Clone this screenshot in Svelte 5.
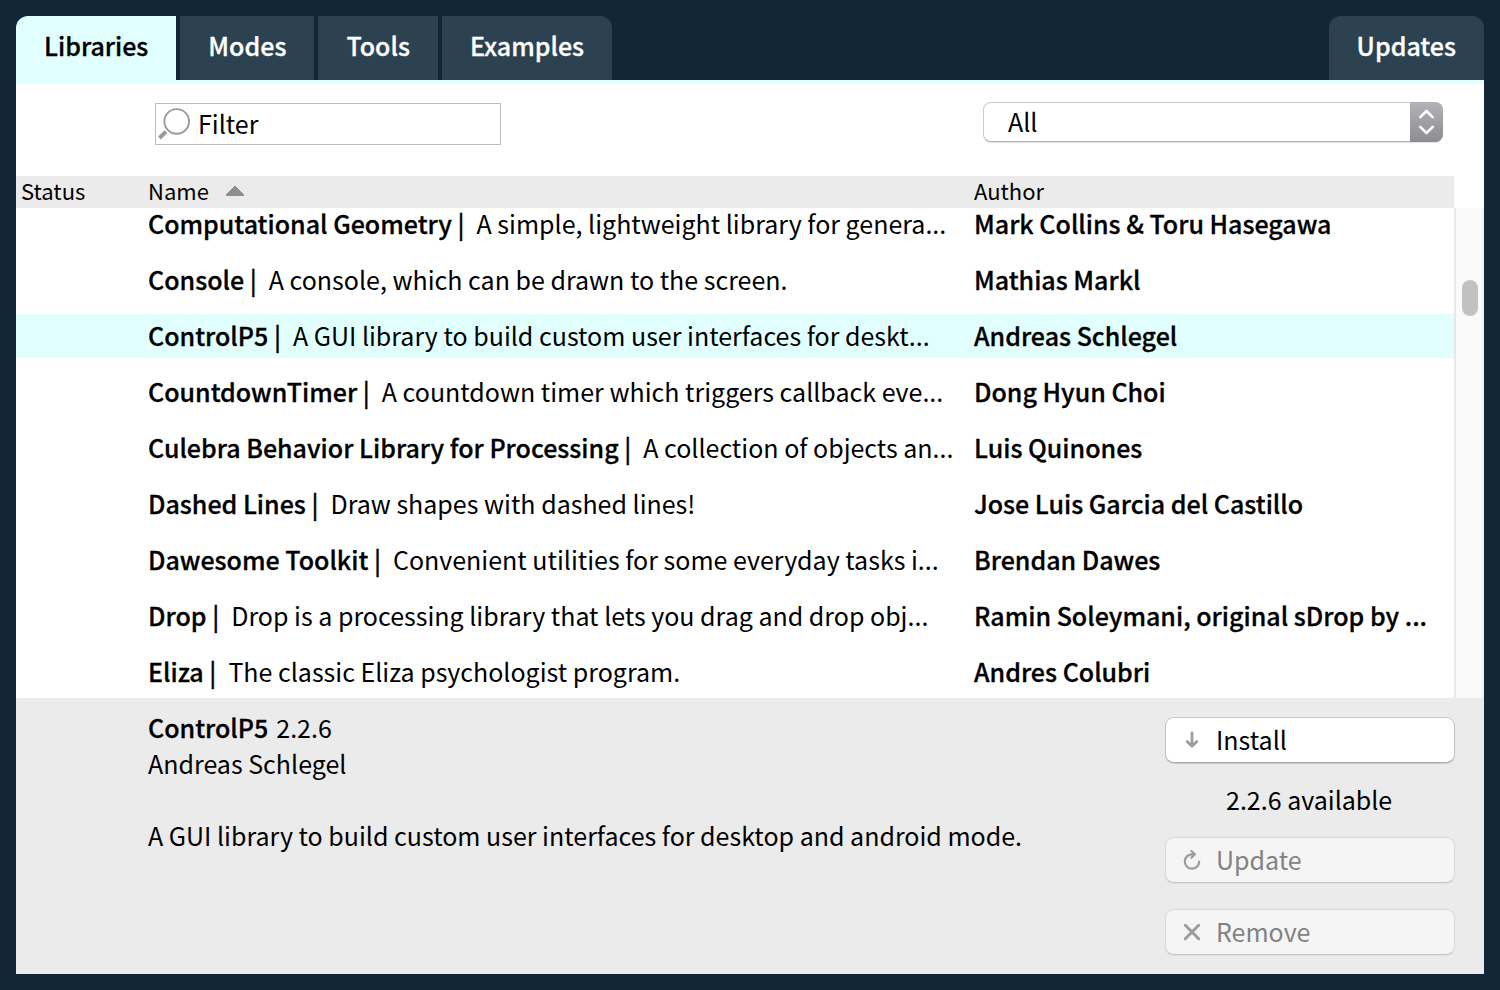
<script>
  import { onMount } from 'svelte';

  const tabs = ['Libraries', 'Modes', 'Tools', 'Examples'];
  const rows = [
    { name: 'Computational Geometry', text: 'A simple, lightweight library for genera...', author: 'Mark Collins & Toru Hasegawa' },
    { name: 'Console', text: 'A console, which can be drawn to the screen.', author: 'Mathias Markl' },
    { name: 'ControlP5', text: 'A GUI library to build custom user interfaces for deskt...', author: 'Andreas Schlegel' },
    { name: 'CountdownTimer', text: 'A countdown timer which triggers callback eve...', author: 'Dong Hyun Choi' },
    { name: 'Culebra Behavior Library for Processing', text: 'A collection of objects an...', author: 'Luis Quinones' },
    { name: 'Dashed Lines', text: 'Draw shapes with dashed lines!', author: 'Jose Luis Garcia del Castillo' },
    { name: 'Dawesome Toolkit', text: 'Convenient utilities for some everyday tasks i...', author: 'Brendan Dawes' },
    { name: 'Drop', text: 'Drop is a processing library that lets you drag and drop obj...', author: 'Ramin Soleymani, original sDrop by ...' },
    { name: 'Eliza', text: 'The classic Eliza psychologist program.', author: 'Andres Colubri' }
  ];

  let active = $state('Libraries');
  let selected = $state('ControlP5');
  let filter = $state('');
  let category = $state('All');
  let list;

  onMount(() => {
    list.scrollTop = 6;
  });
</script>

<div class="window">
  <nav class="tabs">
    {#each tabs as tab}
      <button class="tab" class:active={active === tab} onclick={() => (active = tab)}>{tab}</button>
    {/each}
    <button class="tab updates" class:active={active === 'Updates'} onclick={() => (active = 'Updates')}>Updates</button>
  </nav>

  <main class="panel">
    <div class="toolbar">
      <div class="filter">
        <svg width="34" height="34" viewBox="0 0 34 34" fill="none" stroke="#9a9a9a" aria-hidden="true">
          <circle cx="20.7" cy="15.4" r="12.3" stroke-width="1.9" />
          <path d="M10 25.6 L3.4 32" stroke-width="4" />
        </svg>
        <input type="text" aria-label="Filter" placeholder="Filter" bind:value={filter} />
      </div>
      <div class="category">
        <select aria-label="Category" bind:value={category}>
          <option>All</option>
        </select>
        <svg class="stepper" width="33" height="40" viewBox="0 0 33 40" fill="none" stroke="#fff" stroke-width="2.6" stroke-linecap="round" stroke-linejoin="round" aria-hidden="true">
          <path d="M10.3 15.2 L16.5 9 L22.7 15.2 M10.3 24.8 L16.5 31 L22.7 24.8" />
        </svg>
      </div>
    </div>

    <div class="browser">
      <div class="list" bind:this={list}>
        <table>
          <colgroup>
            <col class="col-status" />
            <col />
            <col class="col-author" />
          </colgroup>
          <thead>
            <tr>
              <th class="status">Status</th>
              <th aria-sort="ascending">
                <span class="sort">Name
                  <svg width="18" height="10" viewBox="0 0 18 10" fill="#8e8e8e" shape-rendering="crispEdges" aria-hidden="true">
                    <path d="M8 0h2v1h1v1h1v1h1v1h1v1h1v1h1v1h1v1h1v2H0V8h1V7h1V6h1V5h1V4h1V3h1V2h1V1h1z" />
                  </svg>
                </span>
              </th>
              <th>Author</th>
            </tr>
          </thead>
          <tbody>
            {#each rows as row}
              <tr class:selected={selected === row.name} onclick={() => (selected = row.name)}>
                <td></td>
                <td><b class="name">{row.name} |</b>{row.text}</td>
                <td><b>{row.author}</b></td>
              </tr>
            {/each}
          </tbody>
        </table>
      </div>
      <div class="gutter">
        <div class="track"><div class="thumb"></div></div>
      </div>
    </div>

    <footer class="details">
      <div class="summary">
        <p><b class="title">ControlP5</b>2.2.6</p>
        <p>Andreas Schlegel</p>
        <p class="about">A GUI library to build custom user interfaces for desktop and android mode.</p>
      </div>
      <div class="actions">
        <button>
          <svg width="20" height="20" viewBox="0 0 20 20" aria-hidden="true">
            <path d="M10 3 V16 M5.2 11.6 L10 16.2 L14.8 11.6" stroke-width="2.8" />
          </svg>
          Install
        </button>
        <p>2.2.6 available</p>
        <button disabled>
          <svg width="20" height="20" viewBox="0 0 20 20" aria-hidden="true">
            <path d="M17.2 11.5 A7.2 7.2 0 1 1 10.5 4.3 H12.5" stroke-width="2.2" />
            <path d="M9.4 1 L12.8 4.3 L9.4 7.8" stroke-width="2.2" />
          </svg>
          Update
        </button>
        <button class="remove" disabled>
          <svg width="20" height="20" viewBox="0 0 20 20" aria-hidden="true">
            <path d="M3.3 3.3 L16.7 16.7 M16.7 3.3 L3.3 16.7" stroke-width="3" />
          </svg>
          Remove
        </button>
      </div>
    </footer>
  </main>
</div>

<style>
  :global(body) {
    background: #132638;
  }

  .window,
  .window * {
    box-sizing: border-box;
  }

  .window {
    display: flex;
    flex-direction: column;
    height: 100vh;
    padding: 16px;
    color: #000;
    font-family: 'Noto Sans CJK SC', 'Open Sans', sans-serif;
    font-size: 25px;
    line-height: 36px;
  }

  button,
  input,
  select {
    font: inherit;
    color: inherit;
  }

  p {
    margin: 0;
  }

  b,
  .tab {
    font-weight: 500;
    -webkit-text-stroke: 0.3px;
  }

  .tabs {
    display: flex;
    gap: 4px;
  }

  .tab {
    height: 64px;
    padding: 0 28px 6px;
    border: 0;
    background: #2d4251;
    color: #fff;
    font-weight: 500;
  }

  .tab:first-child {
    border-top-left-radius: 12px;
  }

  .tab:nth-child(4) {
    border-top-right-radius: 12px;
  }

  .tab.updates {
    margin-left: auto;
    border-radius: 12px 12px 0 0;
  }

  .tab.active {
    background: #e0fffe;
    color: #000;
  }

  .panel {
    flex: 1;
    display: flex;
    flex-direction: column;
    min-height: 0;
    border-top: 4px solid #e0fffe;
    background: #fff;
  }

  .toolbar {
    display: flex;
    justify-content: space-between;
    align-items: flex-start;
    height: 88px;
    padding: 18px 41px 0 139px;
  }

  .filter {
    display: flex;
    align-items: flex-start;
    width: 346px;
    height: 42px;
    margin-top: 1px;
    border: 1px solid #bcbcbc;
  }

  .filter svg {
    margin-top: 2px;
  }

  .filter input {
    flex: 1;
    min-width: 0;
    height: 40px;
    padding: 0 8px 2px;
    border: 0;
    outline: 0;
    background: none;
  }

  .filter input::placeholder {
    color: #000;
    opacity: 1;
  }

  .category {
    position: relative;
    width: 460px;
    height: 40px;
  }

  .category select {
    appearance: none;
    width: 100%;
    height: 40px;
    padding: 0 40px 2px 24px;
    border: 1px solid #cdcdcd;
    border-bottom-color: #b4b4b4;
    border-radius: 8px;
    background: #fff;
    box-shadow: 0 1px 1px rgba(0, 0, 0, 0.12);
  }

  .stepper {
    position: absolute;
    top: 0;
    right: 0;
    border-radius: 0 8px 8px 0;
    background: linear-gradient(#b3b2b7, #8d8c92);
    pointer-events: none;
  }

  .browser {
    flex: 1;
    display: flex;
    min-height: 0;
  }

  .list {
    flex: 1;
    min-width: 0;
    overflow-y: auto;
    scrollbar-width: none;
  }

  table {
    width: 100%;
    table-layout: fixed;
    border-spacing: 0;
  }

  .col-status {
    width: 132px;
  }

  .col-author {
    width: 480px;
  }

  th {
    position: sticky;
    top: 0;
    height: 36px;
    padding: 0 0 4px;
    border-top: 4px solid #fff;
    background: #ebebeb;
    font-size: 22px;
    font-weight: 400;
    line-height: 28px;
    text-align: left;
  }

  th.status {
    padding-left: 5px;
  }

  .sort {
    display: flex;
    align-items: center;
    gap: 17px;
  }

  .sort svg {
    margin-top: 2px;
  }

  td {
    height: 56px;
    padding: 0 0 2px;
    border-bottom: 12px solid #fff;
    line-height: 42px;
    white-space: nowrap;
  }

  .selected td {
    background: #e0fffe;
  }

  .name {
    margin-right: 12px;
  }

  .gutter {
    width: 30px;
    padding-top: 36px;
  }

  .track {
    height: 100%;
    padding: 72px 6px 0;
    border-left: 2px solid #e8e8e8;
    border-right: 2px solid #f0f0f0;
    background: #fafafa;
  }

  .thumb {
    width: 16px;
    height: 36px;
    border-radius: 8px;
    background: #c1c1c1;
  }

  .details {
    display: flex;
    justify-content: space-between;
    padding: 19px 29px 19px 132px;
    background: #ebebeb;
  }

  .summary {
    margin-top: -8px;
  }

  .title {
    margin-right: 8px;
  }

  .about {
    margin-top: 36px;
  }

  .actions {
    display: flex;
    flex-direction: column;
    width: 290px;
  }

  .actions button {
    display: flex;
    align-items: center;
    gap: 14px;
    height: 46px;
    padding: 0 16px 2px;
    border: 1px solid #c6c6c6;
    border-bottom-color: #acacac;
    border-radius: 9px;
    background: #fff;
    box-shadow: 0 1px 1px rgba(0, 0, 0, 0.15);
  }

  .actions button:disabled {
    border-color: #d8d8d8;
    border-bottom-color: #c8c8c8;
    background: #f5f5f5;
    color: #828282;
    box-shadow: 0 1px 1px rgba(0, 0, 0, 0.06);
  }

  .actions svg {
    margin-top: 2px;
    fill: none;
    stroke: #9c9c9c;
    stroke-linecap: round;
    stroke-linejoin: round;
  }

  .actions p {
    margin: 18px 0 20px;
    padding-left: 61px;
  }

  .actions .remove {
    margin-top: 26px;
  }
</style>
